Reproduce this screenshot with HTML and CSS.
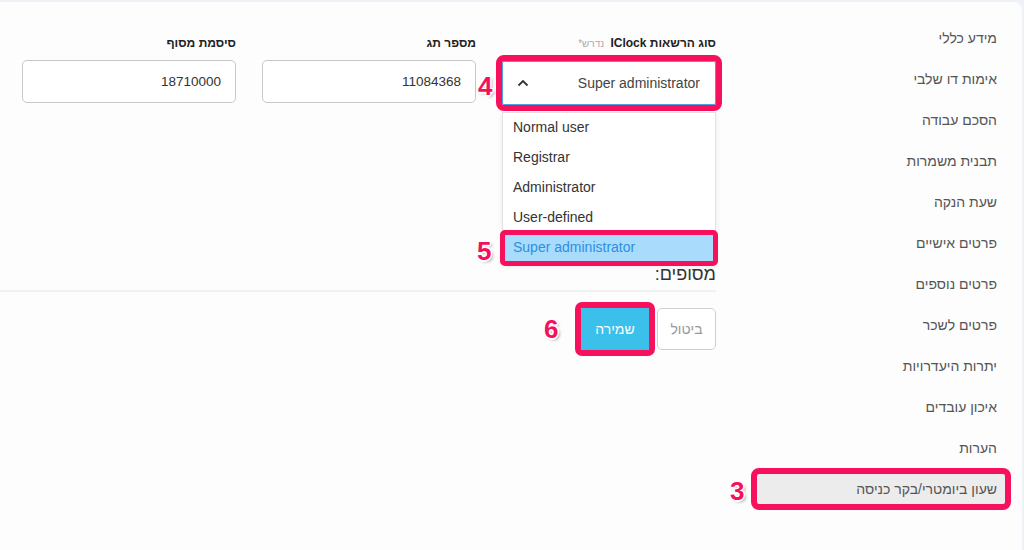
FILE: index.html
```html
<!DOCTYPE html>
<html lang="he" dir="rtl">
<head>
<meta charset="utf-8">
<title>Employee</title>
<link rel="stylesheet" href="styles.css">
</head>
<body>
<div class="card">
  <aside class="sidebar">
    <ul class="menu">
      <li class="menu-item">מידע כללי</li>
      <li class="menu-item">אימות דו שלבי</li>
      <li class="menu-item">הסכם עבודה</li>
      <li class="menu-item">תבנית משמרות</li>
      <li class="menu-item">שעת הנקה</li>
      <li class="menu-item">פרטים אישיים</li>
      <li class="menu-item">פרטים נוספים</li>
      <li class="menu-item">פרטים לשכר</li>
      <li class="menu-item">יתרות היעדרויות</li>
      <li class="menu-item">איכון עובדים</li>
      <li class="menu-item">הערות</li>
      <li class="menu-item active">שעון ביומטרי/בקר כניסה<span class="badge badge-3">3</span></li>
    </ul>
  </aside>
  <main class="main">
    <div class="fields">
      <div class="field">
        <label class="label">סוג הרשאות IClock <span class="req">נדרש*</span></label>
        <div class="select-wrap">
          <div class="select">
            <span class="select-value">Super administrator</span>
            <svg class="chevron" width="12" height="8" viewBox="0 0 12 8"><path d="M1.5 6.5 L6 2 L10.5 6.5" fill="none" stroke="#333" stroke-width="1.8"/></svg>
          </div>
          <span class="badge badge-4">4</span>
          <ul class="dropdown" dir="ltr">
            <li class="option">Normal user</li>
            <li class="option">Registrar</li>
            <li class="option">Administrator</li>
            <li class="option">User-defined</li>
            <li class="option selected">Super administrator<span class="badge badge-5">5</span></li>
          </ul>
        </div>
      </div>
      <div class="field">
        <label class="label">מספר תג</label>
        <div class="input">11084368</div>
      </div>
      <div class="field">
        <label class="label">סיסמת מסוף</label>
        <div class="input">18710000</div>
      </div>
    </div>
    <h3 class="section-title">מסופים:</h3>
    <div class="actions">
      <button class="btn btn-cancel">ביטול</button>
      <button class="btn btn-save">שמירה<span class="badge badge-6">6</span></button>
    </div>
  </main>
</div>
</body>
</html>
```
FILE: styles.css
```css
* { box-sizing: border-box; }
html, body { margin: 0; padding: 0; }
body {
  background: #eef1f5;
  font-family: "Liberation Sans", Arial, sans-serif;
  color: #333;
  width: 1024px;
  height: 550px;
  overflow: hidden;
}
.card {
  margin: 2px 2px 0 0;
  height: 548px;
  background: #fdfdfd;
  border-top-right-radius: 8px;
  display: flex;
  flex-direction: row;
}
.sidebar {
  width: 282px;
  flex: none;
  padding: 21px 17px 0 17px;
}
.menu { list-style: none; margin: 0; padding: 0; }
.menu-item {
  position: relative;
  height: 30px;
  line-height: 30px;
  margin-bottom: 11px;
  padding-right: 8px;
  font-size: 14px;
  color: #555;
}
.menu-item.active {
  background: #ececec;
  outline: 6px solid #f7105c;
  border-radius: 2px;
}
.main {
  flex: 1;
  padding: 33px 24px 0 0;
}
.fields {
  display: flex;
  gap: 26px;
}
.field { width: 214px; flex: none; }
.label {
  display: block;
  font-size: 12px;
  font-weight: bold;
  line-height: 16px;
  margin-bottom: 9px;
  color: #222;
}
.req {
  font-weight: normal;
  font-size: 10px;
  color: #aaa;
  margin-right: 3px;
}
.input {
  height: 43px;
  border: 1px solid #c8c8c8;
  border-radius: 5px;
  padding: 0 14px;
  font-size: 13.5px;
  line-height: 41px;
  color: #333;
  background: #fff;
}
.select-wrap { position: relative; }
.select {
  height: 44px;
  border: 1px solid #4a9fe0;
  border-radius: 2px;
  background: #fff;
  display: flex;
  align-items: center;
  justify-content: space-between;
  padding: 0 15px 0 14px;
  font-size: 14px;
  color: #444;
  outline: 6px solid #f7105c;
  position: relative;
  z-index: 2;
}
.chevron { display: block; }
.dropdown {
  position: absolute;
  top: 51px;
  left: 0;
  right: 0;
  margin: 0;
  padding: 0;
  list-style: none;
  background: #fff;
  border: 1px solid #e2e2e2;
  box-shadow: 0 2px 6px rgba(0,0,0,0.08);
  z-index: 3;
}
.option {
  position: relative;
  height: 30px;
  line-height: 28px;
  padding-left: 10px;
  font-size: 14px;
  color: #333;
  text-align: left;
}
.option.selected {
  background: #a9dcfc;
  color: #2e8fe0;
  outline: 5px solid #f7105c;
  outline-offset: -2px;
  border-radius: 2px;
}
.section-title {
  margin: 159px 0 0 0;
  font-size: 18px;
  font-weight: normal;
  line-height: 20px;
  color: #333;
  padding-bottom: 6px;
  border-bottom: 2px solid #f1f1f1;
}
.actions {
  display: flex;
  gap: 8px;
  margin-top: 16px;
}
.btn {
  position: relative;
  height: 42px;
  border-radius: 5px;
  font-family: "Liberation Sans", Arial, sans-serif;
  font-size: 14px;
  padding: 0;
  cursor: pointer;
}
.btn-cancel {
  width: 59px;
  background: #fff;
  border: 1px solid #cfcfcf;
  color: #999;
}
.btn-save {
  width: 68px;
  background: #3bbfeb;
  border: none;
  color: #fff;
  border-radius: 1px;
  outline: 6px solid #f7105c;
}
.badge {
  position: absolute;
  font-family: "Liberation Sans", Arial, sans-serif;
  font-weight: bold;
  font-size: 26px;
  line-height: 26px;
  color: #f5105c;
  direction: ltr;
  text-shadow:
    1.5px 0 0 #fff, -1.5px 0 0 #fff, 0 1.5px 0 #fff, 0 -1.5px 0 #fff,
    1px 1px 0 #fff, -1px -1px 0 #fff, 1px -1px 0 #fff, -1px 1px 0 #fff,
    2px 2px 3px rgba(0,0,0,0.35);
}
.badge-4 { left: -24px; top: 12px; z-index: 4; }
.badge-5 { left: -26px; top: 5px; }
.badge-6 { left: -37px; top: 8px; }
.badge-3 { left: -27px; top: 4px; }
```
